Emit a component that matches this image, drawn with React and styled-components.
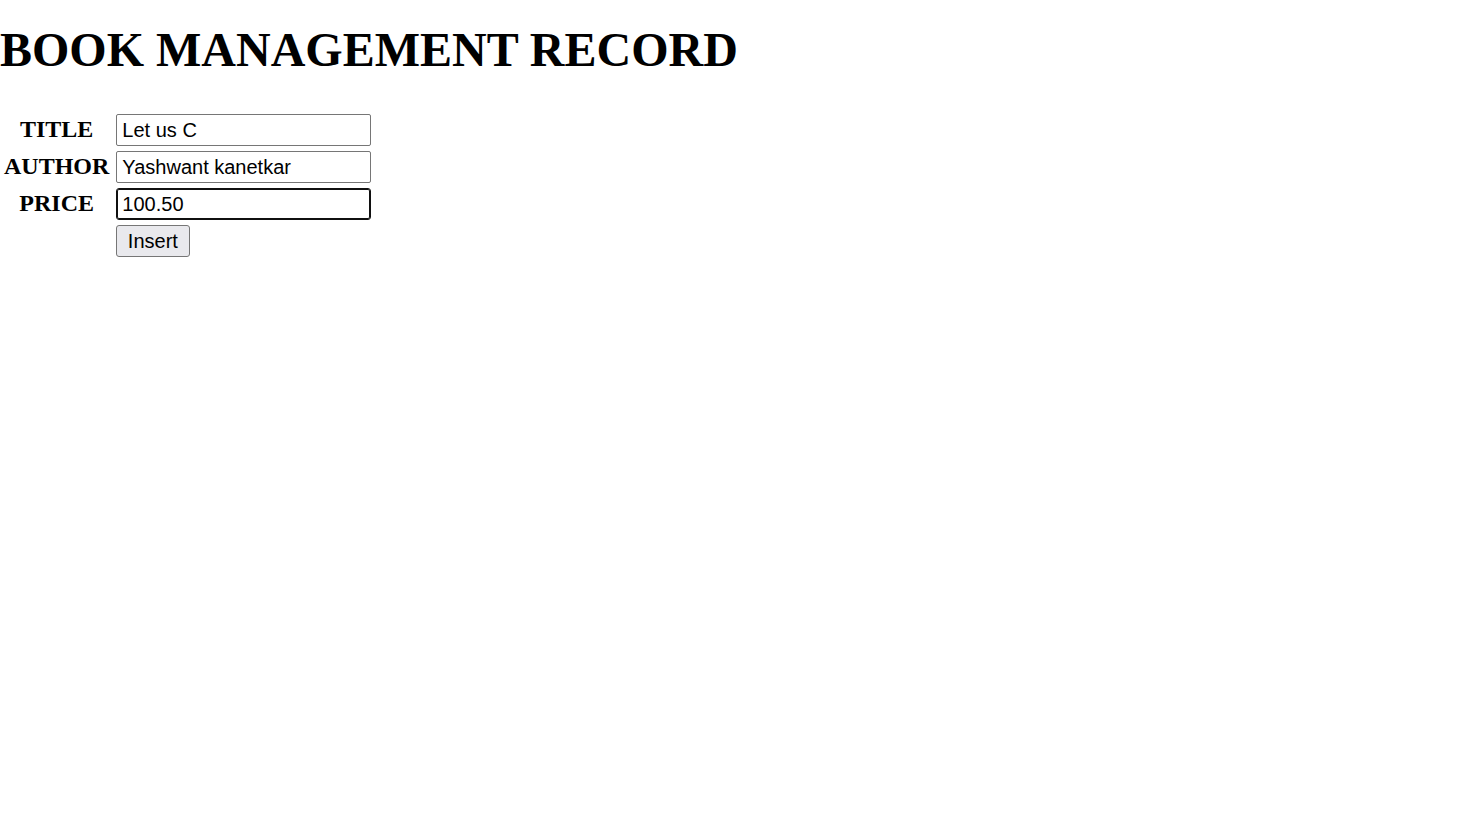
import React from 'react';
import styled, { createGlobalStyle } from 'styled-components';

const GlobalStyle = createGlobalStyle`
  body {
    margin: 0;
    background: #ffffff;
    font-family: 'Liberation Serif', 'Times New Roman', serif;
    color: #000000;
  }
`;

const MainHeader = styled.h1`
  font-family: 'Liberation Serif', 'Times New Roman', serif;
  font-size: 48px;
  font-weight: bold;
  margin: 22px 0 33px 0;
  line-height: normal;
`;

const FormTable = styled.table`
  border-collapse: separate;
  border-spacing: 2px 3px;
`;

const Label = styled.th`
  font-family: 'Liberation Serif', 'Times New Roman', serif;
  font-size: 24px;
  font-weight: bold;
  text-align: center;
  vertical-align: middle;
  padding: 0 4px 2px 2px;
`;

const Cell = styled.td`
  padding: 1px;
  vertical-align: middle;
`;

const TextInput = styled.input`
  box-sizing: border-box;
  display: block;
  width: 255px;
  height: 32px;
  padding: 0 4px 0 5px;
  font-family: 'Liberation Sans', Arial, sans-serif;
  font-size: 20px;
  color: #000000;
  background: #ffffff;
  border: 1px solid ${props => (props.$focused ? '#101010' : '#767676')};
  box-shadow: ${props => (props.$focused ? 'inset 0 0 0 1px #101010' : 'none')};
  border-radius: ${props => (props.$focused ? '3px' : '2px')};
  outline: none;
`;

const InsertButton = styled.button`
  box-sizing: border-box;
  display: block;
  width: 74px;
  height: 32px;
  padding: 0 1px 0 0;
  font-family: 'Liberation Sans', Arial, sans-serif;
  font-size: 20px;
  color: #000000;
  background: #e9e9ed;
  border: 1px solid #767676;
  border-radius: 3px;
`;

const fields = [
  { label: 'TITLE', value: 'Let us C' },
  { label: 'AUTHOR', value: 'Yashwant kanetkar' },
  { label: 'PRICE', value: '100.50', focused: true },
];

const App = () => {
  return (
    <>
      <GlobalStyle />
      <MainHeader>BOOK MANAGEMENT RECORD</MainHeader>
      <form onSubmit={e => e.preventDefault()}>
        <FormTable>
          <tbody>
            {fields.map(f => (
              <tr key={f.label}>
                <Label>{f.label}</Label>
                <Cell>
                  <TextInput type="text" defaultValue={f.value} $focused={f.focused} />
                </Cell>
              </tr>
            ))}
            <tr>
              <Cell />
              <Cell>
                <InsertButton type="submit">Insert</InsertButton>
              </Cell>
            </tr>
          </tbody>
        </FormTable>
      </form>
    </>
  );
};

export default App;
